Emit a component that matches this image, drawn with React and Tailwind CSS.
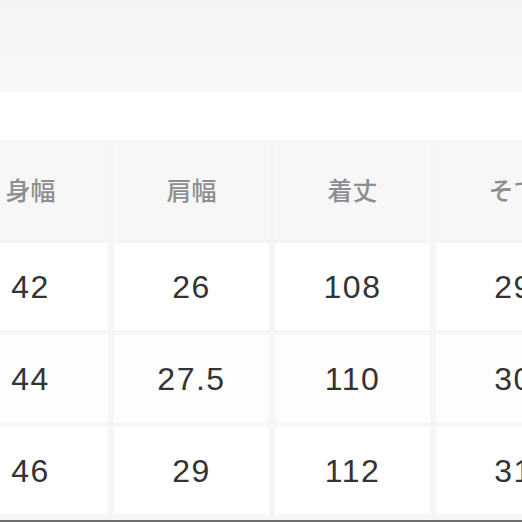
const headers = ['身幅', '肩幅', '着丈', 'そで'];
const rows = [
  ['42', '26', '108', '29'],
  ['44', '27.5', '110', '30'],
  ['46', '29', '112', '31'],
];

const font = { fontFamily: '"Noto Sans CJK JP", "Noto Sans", sans-serif' };

function Cell({ first, children, className }) {
  return (
    <div
      className={`flex items-center justify-center ${first ? 'pr-[47px]' : ''} ${className}`}
    >
      {children}
    </div>
  );
}

export default function App() {
  return (
    <div className="h-[522px] w-[522px] overflow-hidden bg-[#f6f6f6]" style={font}>
      <div className="h-[92px] bg-gradient-to-b from-[#f4f4f4] to-[#f8f8f8]" />
      <div className="h-[48px] bg-white" />
      <div className="grid grid-cols-[108px_155px_155px_155px] gap-x-[6px] bg-[#f5f5f5] pb-[3px]">
        {headers.map((h, i) => (
          <Cell key={h} first={i === 0} className="h-[100px] bg-[#f7f7f7] text-[25px] font-medium text-[#8e8e8e]">
            <span className="whitespace-nowrap">{h}</span>
          </Cell>
        ))}
      </div>
      <div className="grid grid-cols-[108px_155px_155px_155px] gap-x-[6px] gap-y-[5px]">
        {rows.map((r, ri) =>
          r.map((v, ci) => (
            <Cell
              key={`${ri}-${ci}`}
              first={ci === 0}
              className={`h-[87px] text-[32px] tracking-[1.5px] text-[#333333] ${ri === 1 ? 'bg-[#fdfdfd]' : 'bg-white'}`}
            >
              <span className="whitespace-nowrap font-['Liberation_Sans',sans-serif]">{v}</span>
            </Cell>
          ))
        )}
      </div>
      <div className="mt-[6px] h-[3px] bg-[#6e6e6e]" />
    </div>
  );
}
